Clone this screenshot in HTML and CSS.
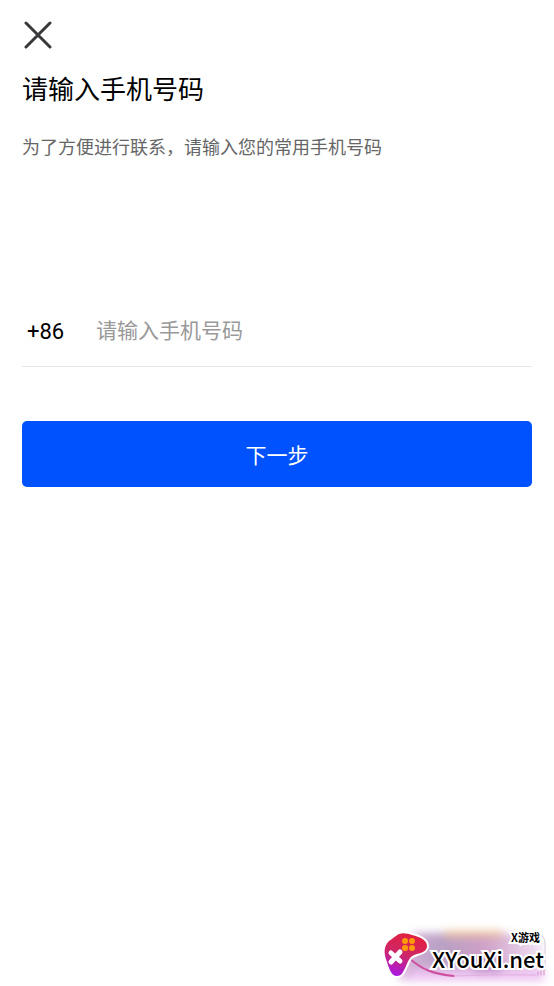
FILE: index.html
```html
<!DOCTYPE html>
<html lang="zh-CN">
<head>
<meta charset="utf-8">
<meta name="viewport" content="width=device-width, initial-scale=1">
<title>请输入手机号码</title>
<link rel="stylesheet" href="styles.css">
</head>
<body>
<main class="page">
  <button class="close" type="button" aria-label="关闭">
    <svg viewBox="0 0 28 28" width="28" height="28" aria-hidden="true"><path d="M2 2 26 26M26 2 2 26"/></svg>
  </button>
  <h1 class="title">请输入手机号码</h1>
  <p class="hint">为了方便进行联系，请输入您的常用手机号码</p>
  <form class="form">
    <div class="field">
      <label class="prefix" for="phone">+86</label>
      <input class="phone" id="phone" type="tel" placeholder="请输入手机号码">
    </div>
    <button class="next" type="button">下一步</button>
  </form>
</main>
<div class="watermark">
  <svg class="art" viewBox="0 0 184 66" width="184" height="66" aria-hidden="true">
    <defs>
      <linearGradient id="pad" x1="0.6" y1="0" x2="0.3" y2="1">
        <stop offset="0" stop-color="#e2203c"/>
        <stop offset="0.5" stop-color="#cf2668"/>
        <stop offset="1" stop-color="#a918e0"/>
      </linearGradient>
      <linearGradient id="haze" x1="0" y1="0" x2="1" y2="0">
        <stop offset="0" stop-color="#dcb6dc"/>
        <stop offset="0.3" stop-color="#b8a0c4"/>
        <stop offset="0.6" stop-color="#cfa0c8"/>
        <stop offset="1" stop-color="#f0e2f4"/>
      </linearGradient>
      <filter id="soft" x="-20%" y="-40%" width="140%" height="180%"><feGaussianBlur stdDeviation="4"/></filter>
    </defs>
    <g filter="url(#soft)">
      <path fill="url(#haze)" d="M44 13H136L172 23V50L46 54L28 61Z"/>
      <path fill="#e9bd98" d="M74 11H132V17H74Z"/>
      <path fill="#edc4f2" d="M44 49H174V61H34Z"/>
      <path fill="#b88bc6" d="M104 42H132V52H104Z"/>
    </g>
    <path class="cable" d="M40 39C52 49 62 54 84 56"/>
    <path class="trail" d="M84 56Q126 54 166 55"/>
    <path class="frame" d="M168 14Q175 15 175 24V50"/>
    <path class="bars" d="M168 55V52M171 55V51M174 55V50"/>
    <path class="pad" fill="url(#pad)" d="M26 16C30 12 36 13 42 15C50 17 57 20 57 26C57 31 52 33 47 34C40 36 39 39 36 46C33 53 31 56 27 56C21 56 19 48 17 42C14 34 13 27 19 21C22 19 23 18 26 16Z"/>
    <path class="cross" d="M21 33 30 41M30 32 21 42"/>
    <g fill="#ff9b0b">
      <circle cx="35" cy="21" r="3"/><circle cx="42" cy="21" r="3"/>
      <circle cx="35" cy="28" r="3"/><circle cx="42" cy="28" r="3"/>
    </g>
  </svg>
  <span class="brand-small">X游戏</span>
  <span class="brand">XYouXi.net</span>
</div>
</body>
</html>
```
FILE: styles.css
```css
* {
  box-sizing: border-box;
}

body {
  margin: 0;
  min-height: 100vh;
  position: relative;
  background: #fff;
  color: #000;
  font-family: Roboto, "Noto Sans CJK SC", sans-serif;
}

.page {
  padding: 20px 22px;
}

button,
input {
  font: inherit;
  border: 0;
  padding: 0;
}

.close {
  display: block;
  width: 32px;
  height: 30px;
  background: none;
  cursor: pointer;
}

.close svg {
  display: block;
  margin-left: 2px;
  fill: none;
  stroke: #38383a;
  stroke-width: 3;
  stroke-linecap: round;
}

.title {
  margin: 22px 0 0;
  font-size: 26px;
  line-height: 36px;
  font-weight: 400;
}

.hint {
  margin: 26px 0 0;
  font-size: 18px;
  line-height: 28px;
  color: #666;
}

.form {
  margin-top: 134px;
}

.field {
  display: flex;
  align-items: center;
  height: 71px;
  border-bottom: 1px solid #e8e8e8;
}

.prefix {
  width: 74px;
  padding-left: 5px;
  font-size: 22px;
}

.phone {
  flex: 1;
  min-width: 0;
  height: 40px;
  background: none;
  font-size: 21px;
  outline: none;
}

.phone::placeholder {
  color: #999;
}

.next {
  display: block;
  width: 100%;
  height: 66px;
  margin-top: 54px;
  border-radius: 5px;
  background: #0052ff;
  color: #fff;
  font-size: 21px;
  cursor: pointer;
}

.watermark {
  position: absolute;
  right: 0;
  bottom: 0;
  display: flex;
  flex-direction: column;
  align-items: flex-end;
  width: 184px;
  height: 66px;
  padding: 10px 10px 0 0;
  font-family: "Noto Sans CJK SC", sans-serif;
}

.art {
  position: absolute;
  inset: 0;
}

.art path {
  stroke-linecap: round;
}

.cable,
.trail,
.frame,
.bars {
  fill: none;
  stroke-width: 1;
}

.cable {
  stroke: #cf4fa0;
  stroke-width: 2;
}

.trail {
  stroke: #e0b0e0;
}

.frame {
  stroke: #d9cfe0;
}

.bars {
  stroke: #d58fc4;
}

.art .pad {
  stroke: #fff;
  stroke-width: 4;
  paint-order: stroke;
}

.art .cross {
  fill: none;
  stroke: #fff;
  stroke-width: 5;
}

.brand,
.brand-small {
  position: relative;
  -webkit-text-stroke: 4px #fff;
  paint-order: stroke fill;
}

.brand {
  font-size: 22px;
  line-height: 28px;
  font-weight: 500;
}

.brand-small {
  padding-right: 4px;
  font-size: 11px;
  line-height: 14px;
  font-weight: 700;
}
```
